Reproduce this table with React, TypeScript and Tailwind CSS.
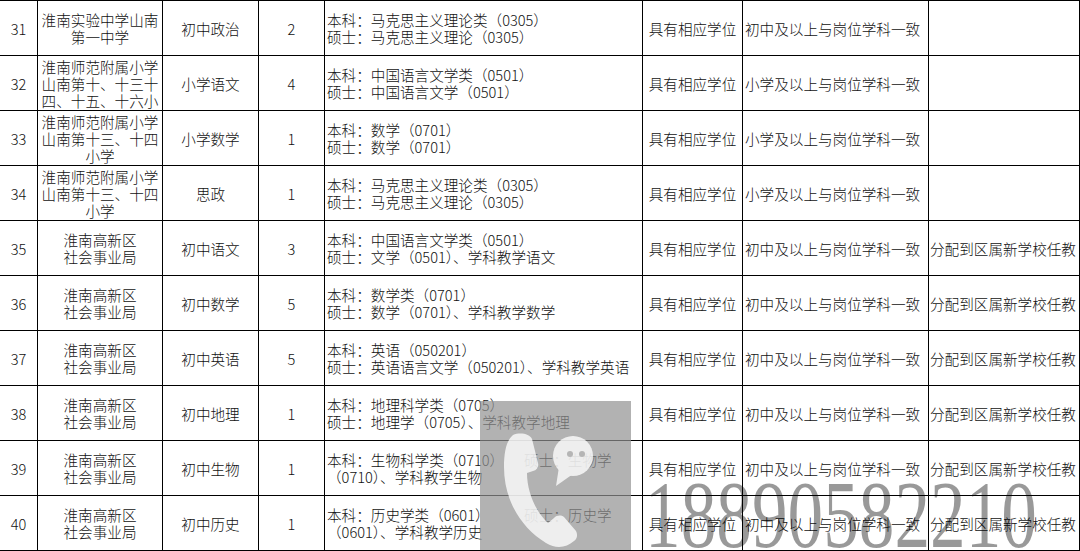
import type { ReactNode } from "react";

type Row = {
  n: number;
  unit: string[];
  subj: string;
  cnt: number;
  req: ReactNode;
  qual: string;
  note: string;
};

const NEW = ["淮南高新区", "社会事业局"];
const NOTE = "分配到区属新学校任教";
const MID = "初中及以上与岗位学科一致";
const PRI = "小学及以上与岗位学科一致";

const lines = (a: string, b: string) => (
  <>
    <div>{a}</div>
    <div>{b}</div>
  </>
);

const split = (a: string, b: string, c: string) => (
  <>
    <div className="whitespace-nowrap">
      <span className="inline-block w-[197px]">{a}</span>
      <span>{b}</span>
    </div>
    <div>{c}</div>
  </>
);

const ROWS: Row[] = [
  { n: 31, unit: ["淮南实验中学山南", "第一中学"], subj: "初中政治", cnt: 2, req: lines("本科：马克思主义理论类（0305）", "硕士：马克思主义理论（0305）"), qual: MID, note: "" },
  { n: 32, unit: ["淮南师范附属小学", "山南第十、十三十", "四、十五、十六小"], subj: "小学语文", cnt: 4, req: lines("本科：中国语言文学类（0501）", "硕士：中国语言文学（0501）"), qual: PRI, note: "" },
  { n: 33, unit: ["淮南师范附属小学", "山南第十三、十四", "小学"], subj: "小学数学", cnt: 1, req: lines("本科：数学（0701）", "硕士：数学（0701）"), qual: PRI, note: "" },
  { n: 34, unit: ["淮南师范附属小学", "山南第十三、十四", "小学"], subj: "思政", cnt: 1, req: lines("本科：马克思主义理论类（0305）", "硕士：马克思主义理论（0305）"), qual: PRI, note: "" },
  { n: 35, unit: NEW, subj: "初中语文", cnt: 3, req: lines("本科：中国语言文学类（0501）", "硕士：文学（0501）、学科教学语文"), qual: MID, note: NOTE },
  { n: 36, unit: NEW, subj: "初中数学", cnt: 5, req: lines("本科：数学类（0701）", "硕士：数学（0701）、学科教学数学"), qual: MID, note: NOTE },
  { n: 37, unit: NEW, subj: "初中英语", cnt: 5, req: lines("本科：英语（050201）", "硕士：英语语言文学（050201）、学科教学英语"), qual: MID, note: NOTE },
  { n: 38, unit: NEW, subj: "初中地理", cnt: 1, req: lines("本科：地理科学类（0705）", "硕士：地理学（0705）、学科教学地理"), qual: MID, note: NOTE },
  { n: 39, unit: NEW, subj: "初中生物", cnt: 1, req: split("本科：生物科学类（0710）", "硕士：生物学", "（0710）、学科教学生物"), qual: MID, note: NOTE },
  { n: 40, unit: NEW, subj: "初中历史", cnt: 1, req: split("本科：历史学类（0601）", "硕士：历史学", "（0601）、学科教学历史"), qual: MID, note: NOTE },
];

function Cell({ children, center, className = "" }: { children?: ReactNode; center?: boolean; className?: string }) {
  return (
    <div
      className={`flex border-r border-black ${center ? "items-center justify-center text-center" : "items-center"} ${className}`}
    >
      <div>{children}</div>
    </div>
  );
}

function Watermark() {
  return (
    <>
      <div className="absolute left-[480px] top-[401px] h-[149px] w-[151px] bg-[#929292]/70">
        <svg width="151" height="149" viewBox="0 0 151 149" className="absolute inset-0">
          <g opacity="0.78" fill="#fff">
            {/* handset */}
            <path d="M33 34 C40 31 50 33 52 38 L58 62 C59 66 57 69 53 70 L47 72 C47 90 55 110 68 122 L74 117 C77 114 81 114 84 116 L96 130 C98 134 97 138 94 140 C86 147 76 148 66 142 C40 126 24 98 24 66 C24 52 26 40 33 34 Z" />
            {/* speech bubble */}
            <circle cx="93" cy="55" r="20" />
            <path d="M79 66 L76 85 L93 73 Z" />
          </g>
          <circle cx="90" cy="53" r="3" fill="#b5b5b5" />
          <circle cx="102" cy="53" r="3" fill="#b5b5b5" />
        </svg>
      </div>
      <div className="pointer-events-none absolute left-[645px] top-[468px] origin-left scale-x-[0.75] whitespace-nowrap font-['Liberation_Serif',serif] text-[95px] leading-[95px] text-black/40">
        18890582210
      </div>
    </>
  );
}

export default function App() {
  return (
    <div className="relative h-[551px] w-[1080px] overflow-hidden bg-white font-['Noto_Sans_CJK_SC',sans-serif] text-[14.6px] font-light leading-[17px] text-[#111]">
      <div className="border-t border-black">
        {ROWS.map((r) => (
          <div
            key={r.n}
            className="grid h-[55px] grid-cols-[38px_125px_96px_66px_318px_100px_186px_151px] border-b border-black"
          >
            <Cell center>{r.n}</Cell>
            <Cell center>
              {r.unit.map((u) => (
                <div key={u} className="whitespace-nowrap">{u}</div>
              ))}
            </Cell>
            <Cell center>{r.subj}</Cell>
            <Cell center>{r.cnt}</Cell>
            <Cell className="pl-[2px] whitespace-nowrap">{r.req}</Cell>
            <Cell center className="whitespace-nowrap">具有相应学位</Cell>
            <Cell className="pl-[2px] whitespace-nowrap">{r.qual}</Cell>
            <Cell className="pl-[1px] whitespace-nowrap">{r.note}</Cell>
          </div>
        ))}
      </div>
      <Watermark />
    </div>
  );
}
